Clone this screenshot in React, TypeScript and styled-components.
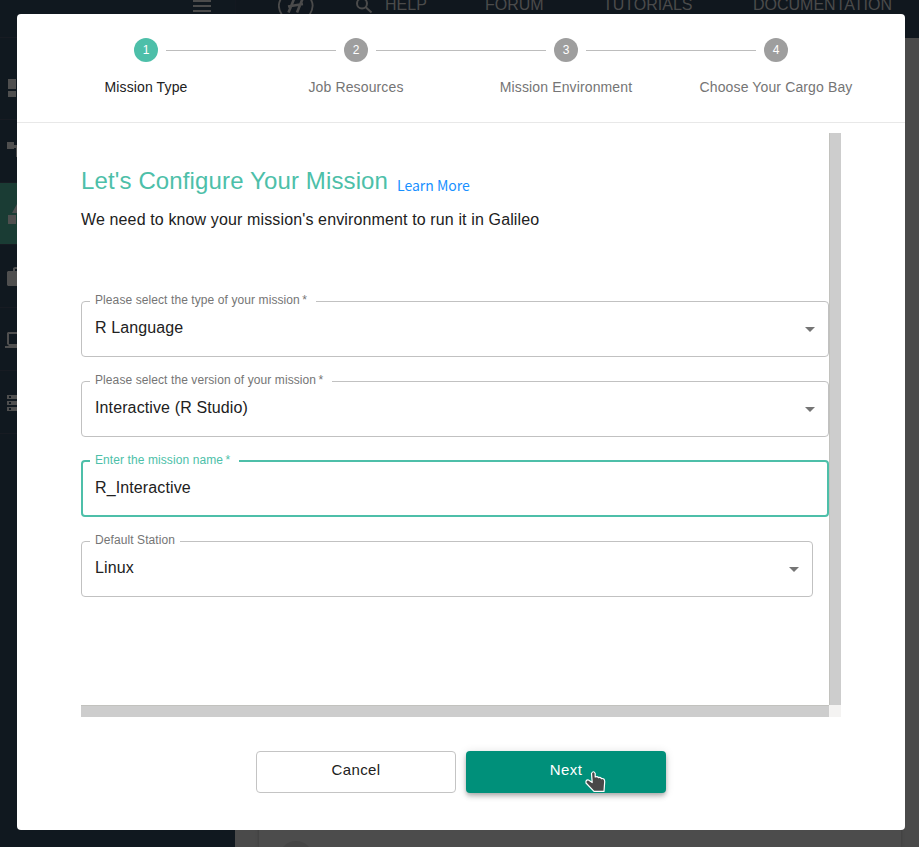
import React from "react";
import styled, { createGlobalStyle } from "styled-components";

const GlobalStyle = createGlobalStyle`
  * { box-sizing: border-box; }
  body { margin: 0; font-family: "Liberation Sans", Arial, sans-serif; color: #212121; overflow: hidden; }
`;

const Page = styled.div`
  position: relative;
  width: 919px;
  height: 847px;
  overflow: hidden;
  display: grid;
  grid-template-columns: 235px 1fr;
  background: #4a4a4a;
`;
const Sidebar = styled.aside`
  background: #10181f;
`;
const MenuRow = styled.div`
  height: 38px;
  border-bottom: 1px solid #171b22;
  padding-left: 193px;
  svg { display: block; }
`;
const NavItem = styled.div<{ $height: number; $active?: boolean }>`
  height: ${(p) => p.$height}px;
  border-bottom: 1px solid #171b22;
  background: ${(p) => (p.$active ? "#1a3c34" : "transparent")};
  svg { display: block; }
`;
const Main = styled.div`
  display: flex;
  flex-direction: column;
`;
const TopBar = styled.nav`
  height: 38px;
  display: flex;
  align-items: flex-start;
  background: #10171e;
  color: #4b4b4b;
  border-left: 1px solid #131820;
`;
const Logo = styled.svg`
  margin-left: 42px;
  flex: none;
`;
const SearchIcon = styled.svg`
  margin-left: 41px;
  flex: none;
`;
const TopLink = styled.span<{ $gap: number; $width: number }>`
  margin: -4px 0 0 ${(p) => p.$gap}px;
  width: ${(p) => p.$width}px;
  flex: none;
  font-size: 16px;
  line-height: 18px;
  white-space: nowrap;
`;
const Card = styled.div`
  margin: auto 18px 0 24px;
  height: 60px;
  background: #4c4c4c;
  box-shadow: 0 0 3px #3a3a3a;
  padding: 54px 0 0 20px;
  overflow: hidden;
`;
const Avatar = styled.div`
  width: 34px;
  height: 34px;
  border-radius: 50%;
  background: #454545;
`;

const Dialog = styled.section`
  position: absolute;
  left: 17px;
  top: 14px;
  width: 888px;
  height: 816px;
  background: #fff;
  border-radius: 4px;
  display: flex;
  flex-direction: column;
`;
const Stepper = styled.ol`
  margin: 0;
  padding: 24px 24px 0;
  list-style: none;
  height: 109px;
  display: flex;
  border-bottom: 1px solid #e8e8e8;
`;
const Step = styled.li<{ $active: boolean }>`
  width: 210px;
  display: flex;
  flex-direction: column;
  align-items: center;
  font-size: 14px;
  line-height: 20px;
  letter-spacing: 0.13px;
  color: ${(p) => (p.$active ? "#212121" : "#757575")};
`;
const StepTrack = styled.div`
  width: 100%;
  height: 24px;
  margin-bottom: 15px;
  display: grid;
  grid-template-columns: 1fr 24px 1fr;
  gap: 8px;
  align-items: center;
`;
const Connector = styled.span<{ $hidden: boolean }>`
  height: 1px;
  margin-top: 1px;
  background: ${(p) => (p.$hidden ? "transparent" : "#bdbdbd")};
`;
const StepNumber = styled.span<{ $active: boolean }>`
  height: 24px;
  border-radius: 50%;
  background: ${(p) => (p.$active ? "#4dbfa9" : "#9e9e9e")};
  color: #fff;
  font-size: 12px;
  line-height: 24px;
  letter-spacing: 0;
  text-align: center;
`;

const ScrollArea = styled.div`
  margin: 10px 0 0 64px;
  width: 760px;
  height: 584px;
  display: grid;
  grid-template-columns: 748px 12px;
  grid-template-rows: 572px 12px;
`;
const Form = styled.div`
  padding-top: 32px;
`;
const Track = styled.div<{ $side: "right" | "bottom" }>`
  background: #cdcdcd;
  border: 0 solid #c2c2be;
  ${(p) => (p.$side === "right" ? "border-left-width: 1px;" : "border-top-width: 1px;")}
`;
const Corner = styled.div`
  background: #f4f3f2;
`;
const TitleRow = styled.div`
  display: flex;
  align-items: flex-start;
  height: 45px;
`;
const Title = styled.h1`
  margin: 0;
  font-size: 24px;
  font-weight: 400;
  line-height: 32px;
  letter-spacing: 0.13px;
  white-space: nowrap;
  color: #4dbfa9;
  width: 316px;
`;
const LearnMore = styled.a`
  margin-top: 8px;
  font-family: "Noto Sans CJK SC", sans-serif;
  font-size: 14px;
  line-height: 24px;
  color: #1890ff;
`;
const Intro = styled.p`
  margin: 0 0 65px;
  font-size: 16px;
  line-height: 20px;
  letter-spacing: 0.13px;
`;

const Field = styled.fieldset<{ $focused?: boolean; $short?: boolean }>`
  position: relative;
  margin: 0 0 18px;
  width: ${(p) => (p.$short ? 732 : 748)}px;
  height: 62px;
  min-width: 0;
  padding: ${(p) => (p.$focused ? "0 13px 0 7px" : "0 14px 0 8px")};
  border: ${(p) => (p.$focused ? "2px solid #4dbfa9" : "1px solid #c1c1c1")};
  border-radius: 4px;
  legend {
    height: 12px;
    padding: 0 5px;
    font-size: 12px;
    line-height: 11px;
    letter-spacing: 0.09px;
    white-space: pre;
    color: ${(p) => (p.$focused ? "#4dbfa9" : "#757575")};
  }
`;
const Value = styled.div`
  display: flex;
  justify-content: space-between;
  align-items: center;
  padding-left: 5px;
  height: 42px;
  font-size: 16px;
  line-height: 42px;
  letter-spacing: 0.12px;
`;
const Arrow = styled.svg`
  margin: 2px -1px 0 0;
`;

const Actions = styled.div`
  margin-top: 34px;
  display: flex;
  justify-content: center;
  gap: 10px;
`;
const Button = styled.button<{ $primary?: boolean }>`
  position: relative;
  width: 200px;
  height: 42px;
  padding: 0 0 5px;
  border: ${(p) => (p.$primary ? "0" : "1px solid #c4c4c4")};
  border-radius: 4px;
  background: ${(p) => (p.$primary ? "#00907a" : "#fff")};
  color: ${(p) => (p.$primary ? "#fff" : "#212121")};
  box-shadow: ${(p) =>
    p.$primary ? "0 2px 4px -1px rgba(0,0,0,.2), 0 4px 5px rgba(0,0,0,.14), 0 1px 10px rgba(0,0,0,.12)" : "none"};
  font: 15px "Liberation Sans", Arial, sans-serif;
  letter-spacing: 0.4px;
`;
const Pointer = styled.svg`
  position: absolute;
  left: 118px;
  top: 18px;
`;

const steps = ["Mission Type", "Job Resources", "Mission Environment", "Choose Your Cargo Bay"];

const fields = [
  { label: "Please select the type of your mission\u2009* ", value: "R Language", select: true },
  { label: "Please select the version of your mission\u2009* ", value: "Interactive (R Studio)", select: true },
  { label: "Enter the mission name\u2009* ", value: "R_Interactive", focused: true },
  { label: "Default Station", value: "Linux", select: true, short: true },
];

const navItems = [
  { height: 82, icon: <path d="M8 41h8v10H8zM8 53h8v6H8z" /> },
  { height: 63, icon: <path d="M7 22h7v3h3v12h-1V28h-2v1H7z" /> },
  { height: 62, active: true, icon: <path d="M17 21v9h-5zM8 32h8v9H8z" /> },
  { height: 63, icon: <path d="M8 26h5v-3l2-1h2v2h-2v2h2v15H8l-1-1V27z" /> },
  { height: 63, icon: <path d="M8 24h9v2H9v10h8v4H5v-2h4l-2-2V25z" /> },
  {
    height: 63,
    icon: <path fillRule="evenodd" d="M7 24h10v4H7zm2 1v2h2v-2zM7 30h10v4H7zm2 1v2h2v-2zM7 36h10v4H7zm2 1v2h2v-2z" />,
  },
];

export default function App() {
  return (
    <>
      <GlobalStyle />
      <Page>
        <Sidebar>
          <MenuRow>
            <svg width="18" height="12" fill="#4b4b4b">
              <path d="M0 0h18v2H0zM0 5h18v2H0zM0 10h18v2H0z" />
            </svg>
          </MenuRow>
          {navItems.map((item, i) => (
            <NavItem key={i} $height={item.height} $active={item.active}>
              <svg width="17" height="61" fill="#4f4f4f">
                {item.icon}
              </svg>
            </NavItem>
          ))}
        </Sidebar>
        <Main>
          <TopBar>
            <Logo width="36" height="20" fill="none" stroke="#4b4b4b" strokeWidth="1.8">
              <path d="M3.5 -2C0 3 0 9 4 15M32 -2c3.500 5 3.500 11-.5 17" />
              <path d="M16 -1L10.500 12.500M24.500 -1L19 12.500M10 6.500L25 4" strokeWidth="2.6" />
            </Logo>
            <SearchIcon width="18" height="18" fill="none" stroke="#4b4b4b" strokeWidth="2">
              <circle cx="7" cy="3.5" r="5" />
              <path d="M10.5 7l6 5.5" />
            </SearchIcon>
            <TopLink $gap={12} $width={48}>HELP</TopLink>
            <TopLink $gap={52} $width={60}>FORUM</TopLink>
            <TopLink $gap={58} $width={90}>TUTORIALS</TopLink>
            <TopLink $gap={60} $width={145}>DOCUMENTATION</TopLink>
          </TopBar>
          <Card>
            <Avatar />
          </Card>
        </Main>
        <Dialog>
          <Stepper>
            {steps.map((label, i) => (
              <Step key={label} $active={i === 0}>
                <StepTrack>
                  <Connector $hidden={i === 0} />
                  <StepNumber $active={i === 0}>{i + 1}</StepNumber>
                  <Connector $hidden={i === steps.length - 1} />
                </StepTrack>
                {label}
              </Step>
            ))}
          </Stepper>
          <ScrollArea>
            <Form>
              <TitleRow>
                <Title>Let's Configure Your Mission</Title>
                <LearnMore>Learn More</LearnMore>
              </TitleRow>
              <Intro>We need to know your mission's environment to run it in Galileo</Intro>
              {fields.map((f) => (
                <Field key={f.label} $focused={f.focused} $short={f.short}>
                  <legend>{f.label}</legend>
                  <Value>
                    {f.value}
                    {f.select && (
                      <Arrow width="10" height="5" fill="#757575">
                        <path d="M0 0h10L5 5z" />
                      </Arrow>
                    )}
                  </Value>
                </Field>
              ))}
            </Form>
            <Track $side="right" />
            <Track $side="bottom" />
            <Corner />
          </ScrollArea>
          <Actions>
            <Button>Cancel</Button>
            <Button $primary>
              Next
              <Pointer width="24" height="26">
                <path
                  d="M7.500 4.500Q9.500 1 11.200 4.500V8Q13.500 7 14.500 8.600Q16.500 8 17.500 9.600Q20.500 9 20.700 12.500L20 22.400H10L2 14Q1.500 10.500 4.500 11L8.200 13.500Z"
                  fill="#484848"
                  stroke="#fff"
                  strokeWidth="1.2"
                  strokeLinejoin="round"
                />
              </Pointer>
            </Button>
          </Actions>
        </Dialog>
      </Page>
    </>
  );
}
